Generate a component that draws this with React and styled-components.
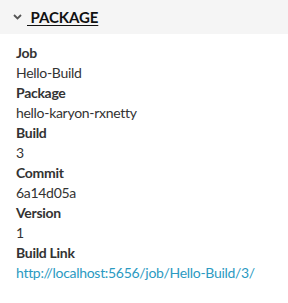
import React from "react";
import styled, { createGlobalStyle } from "styled-components";

const GlobalStyle = createGlobalStyle`
  body {
    margin: 0;
    background: #fff;
    font-family: "Lato", "Noto Sans", sans-serif;
  }
`;

const Panel = styled.section`
  width: 288px;
`;

const Header = styled.div`
  display: flex;
  align-items: center;
  height: 34px;
  padding-left: 13px;
  background-color: #f5f5f5;
  gap: 5px;
`;

const Title = styled.a`
  font-size: 15px;
  font-weight: 700;
  color: #111;
  text-decoration: underline;
  text-underline-offset: 2px;
  letter-spacing: -0.1px;
`;

const Body = styled.dl`
  margin: 0;
  padding: 9px 16px 0;
  font-size: 14px;
  line-height: 20px;
  letter-spacing: -0.3px;
`;

const Label = styled.dt`
  font-weight: 700;
  color: #333;
`;

const Value = styled.dd`
  margin: 0;
  color: #333;
`;

const LinkValue = styled.a`
  color: #2b9ac2;
  text-decoration: none;
`;

const Chevron = () => (
  <svg width="9" height="6" viewBox="0 0 9 6">
    <path d="M1 1l3.5 3.5L8 1" fill="none" stroke="#555" strokeWidth="1.8" />
  </svg>
);

const rows = [
  ["Job", "Hello-Build"],
  ["Package", "hello-karyon-rxnetty"],
  ["Build", "3"],
  ["Commit", "6a14d05a"],
  ["Version", "1"],
];

export default function App() {
  return (
    <Panel>
      <GlobalStyle />
      <Header>
        <Chevron />
        <Title href="#">&nbsp;PACKAGE</Title>
      </Header>
      <Body>
        {rows.map(([k, v]) => (
          <React.Fragment key={k}>
            <Label>{k}</Label>
            <Value>{v}</Value>
          </React.Fragment>
        ))}
        <Label>Build Link</Label>
        <Value>
          <LinkValue href="#">http://localhost:5656/job/Hello-Build/3/</LinkValue>
        </Value>
      </Body>
    </Panel>
  );
}
